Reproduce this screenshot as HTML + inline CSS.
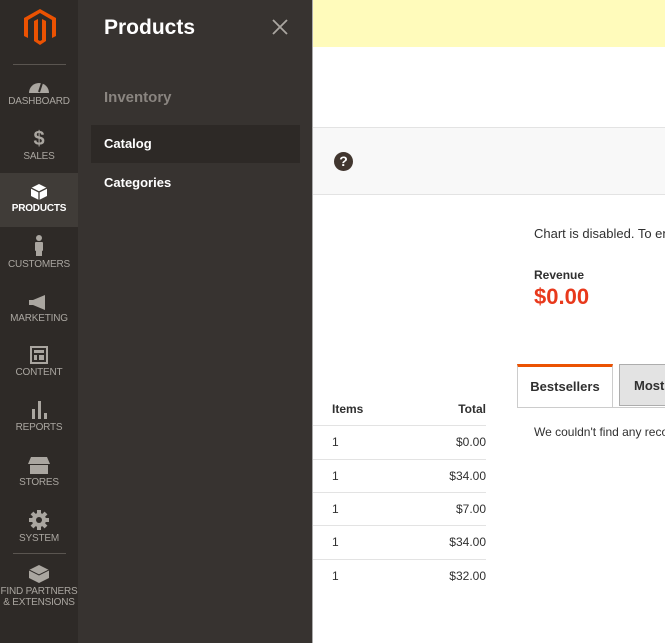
<!DOCTYPE html>
<html><head><meta charset="utf-8"><style>
*{margin:0;padding:0;box-sizing:border-box}
body{width:665px;height:643px;overflow:hidden;position:relative;background:#fff;font-family:"Liberation Sans",sans-serif;color:#303030}
.abs{position:absolute}
#side{left:0;top:0;width:78px;height:643px;background:#2e2a27}
.it{position:absolute;left:0;width:78px;text-align:center;color:#aaa6a0;font-size:10px;letter-spacing:-0.2px}
.it svg{display:block;margin:0 auto 3px}
#fly{left:78px;top:0;width:235px;height:643px;background:#373330;border-right:1px solid #aaa}
</style></head><body>
<div class="abs" style="left:313px;top:0;width:352px;height:47px;background:#fffbbb"></div>
<div class="abs" style="left:313px;top:127px;width:352px;height:68px;background:#f8f8f8;border-top:1px solid #e3e3e3;border-bottom:1px solid #e3e3e3"></div>
<div class="abs" style="left:334px;top:152px;width:19px;height:19px;border-radius:50%;background:#41362f;color:#fff;font-weight:bold;font-size:14px;text-align:center;line-height:19px">?</div>
<div class="abs" style="left:534px;top:226px;font-size:13px;white-space:nowrap">Chart is disabled. To enable</div>
<div class="abs" style="left:534px;top:268px;font-size:12px;font-weight:bold">Revenue</div>
<div class="abs" style="left:534px;top:284px;font-size:22px;font-weight:bold;color:#e8391c">$0.00</div>
<div class="abs" style="left:517px;top:364px;width:96px;height:44px;background:#fff;border:1px solid #ccc;border-top:3px solid #eb5202;border-bottom:none;font-size:13px;font-weight:bold;text-align:center;line-height:40px">Bestsellers</div>
<div class="abs" style="left:619px;top:364px;width:60px;height:42px;background:#e3e3e3;border:1px solid #adadad;font-size:13px;font-weight:bold;line-height:42px;padding-left:14px">Most</div>
<div class="abs" style="left:517px;top:407px;width:148px;border-top:1px solid #ccc"></div>
<div class="abs" style="left:534px;top:425px;font-size:12px;white-space:nowrap">We couldn't find any records</div>
<div class="abs" style="left:332px;top:402px;font-size:12px;font-weight:bold">Items</div>
<div class="abs" style="left:440px;top:402px;width:46px;text-align:right;font-size:12px;font-weight:bold">Total</div>
<div class="abs" style="left:313px;top:425px;width:173px;font-size:12px">
<div style="height:34px;border-top:1px solid #e3e3e3;position:relative"><span class="abs" style="left:19px;top:9px">1</span><span class="abs" style="right:0;top:9px">$0.00</span></div>
<div style="height:33px;border-top:1px solid #e3e3e3;position:relative"><span class="abs" style="left:19px;top:9px">1</span><span class="abs" style="right:0;top:9px">$34.00</span></div>
<div style="height:33px;border-top:1px solid #e3e3e3;position:relative"><span class="abs" style="left:19px;top:9px">1</span><span class="abs" style="right:0;top:9px">$7.00</span></div>
<div style="height:34px;border-top:1px solid #e3e3e3;position:relative"><span class="abs" style="left:19px;top:9px">1</span><span class="abs" style="right:0;top:9px">$34.00</span></div>
<div style="height:33px;border-top:1px solid #e3e3e3;position:relative"><span class="abs" style="left:19px;top:9px">1</span><span class="abs" style="right:0;top:9px">$32.00</span></div>
</div>

<div id="side" class="abs">
<svg class="abs" style="left:24px;top:9px" width="32" height="36" viewBox="0 0 32 36"><path d="M16 0 L32 9 V27 L28 29 V11 L16 4 L4 11 V29 L0 27 V9 Z M18 10 L22 12 V32 L16 36 L10 32 V12 L14 10 V31 L16 32 L18 31 Z" fill="#eb5202"/></svg>
<div class="abs" style="left:13px;top:64px;width:53px;border-top:1px solid #5a5550"></div>
<div class="abs" style="left:0;top:173px;width:78px;height:54px;background:#403c38"></div>
<div class="it" style="top:79px"><svg width="20" height="14" viewBox="0 0 20 14"><path d="M0 14 A10 10 0 0 1 20 14 Z" fill="#aaa6a0"/><path d="M10 13 L13 4" stroke="#2e2a27" stroke-width="2"/></svg>DASHBOARD</div>
<div class="it" style="top:129px"><div style="font-size:20px;font-weight:bold;line-height:20px;margin-bottom:2px">$</div>SALES</div>
<div class="it" style="top:184px;color:#fff;font-weight:bold"><svg width="16" height="16" viewBox="0 0 16 16"><path d="M8 0 L16 4 V12 L8 16 L0 12 V4 Z" fill="#fff"/><path d="M0 4 L8 8 L16 4 M8 8 V16" stroke="#403c38" stroke-width="1.3" fill="none"/></svg>PRODUCTS</div>
<div class="it" style="top:235px"><svg width="12" height="21" viewBox="0 0 12 21"><circle cx="6" cy="3" r="3" fill="#aaa6a0"/><rect x="2" y="7" width="8" height="9" rx="1" fill="#aaa6a0"/><rect x="3" y="15" width="6" height="6" fill="#aaa6a0"/></svg>CUSTOMERS</div>
<div class="it" style="top:295px"><svg width="20" height="15" viewBox="0 0 20 15"><path d="M0 5 H4 L16 0 V15 L4 10 H0 Z" fill="#aaa6a0"/></svg>MARKETING</div>
<div class="it" style="top:346px"><svg width="18" height="18" viewBox="0 0 18 18"><rect x="1" y="1" width="16" height="16" fill="none" stroke="#aaa6a0" stroke-width="2"/><rect x="4" y="4" width="10" height="3" fill="#aaa6a0"/><rect x="4" y="9" width="3" height="5" fill="#aaa6a0"/><rect x="9" y="9" width="5" height="5" fill="#aaa6a0"/></svg>CONTENT</div>
<div class="it" style="top:401px"><svg width="18" height="18" viewBox="0 0 18 18"><rect x="2" y="8" width="3" height="10" fill="#aaa6a0"/><rect x="8" y="0" width="3" height="18" fill="#aaa6a0"/><rect x="14" y="12" width="3" height="6" fill="#aaa6a0"/></svg>REPORTS</div>
<div class="it" style="top:457px"><svg width="22" height="17" viewBox="0 0 22 17"><path d="M3 0 H19 L22 7 H0 Z" fill="#aaa6a0"/><rect x="2" y="8" width="18" height="9" fill="#aaa6a0"/></svg>STORES</div>
<div class="it" style="top:510px"><svg width="20" height="20" viewBox="0 0 20 20"><circle cx="10" cy="10" r="7" fill="#aaa6a0"/><g stroke="#aaa6a0" stroke-width="4"><path d="M10 0V20M0 10H20M3 3L17 17M17 3L3 17"/></g><circle cx="10" cy="10" r="3" fill="#2e2a27"/></svg>SYSTEM</div>
<div class="abs" style="left:13px;top:553px;width:53px;border-top:1px solid #5a5550"></div>
<div class="it" style="top:563px;line-height:11px"><svg width="20" height="20" viewBox="0 0 20 20"><path d="M10 2 L20 7 V15 L10 20 L0 15 V7 Z" fill="#aaa6a0"/><path d="M0 7 L10 12 L20 7" stroke="#2e2a27" stroke-width="1" fill="none"/></svg>FIND PARTNERS<br>&amp; EXTENSIONS</div>
</div>

<div id="fly" class="abs">
<div class="abs" style="left:26px;top:16px;color:#fff;font-size:21px;font-weight:bold">Products</div>
<svg class="abs" style="left:194px;top:19px" width="16" height="16" viewBox="0 0 16 16"><path d="M1 1L15 15M15 1L1 15" stroke="#aaa6a0" stroke-width="1.8"/></svg>
<div class="abs" style="left:26px;top:89px;color:#8a8580;font-size:15px;font-weight:bold">Inventory</div>
<div class="abs" style="left:13px;top:125px;width:209px;height:38px;background:#2d2926"></div>
<div class="abs" style="left:26px;top:136px;color:#fff;font-size:13px;font-weight:bold">Catalog</div>
<div class="abs" style="left:26px;top:175px;color:#fff;font-size:13px;font-weight:bold">Categories</div>
</div>
</body></html>
